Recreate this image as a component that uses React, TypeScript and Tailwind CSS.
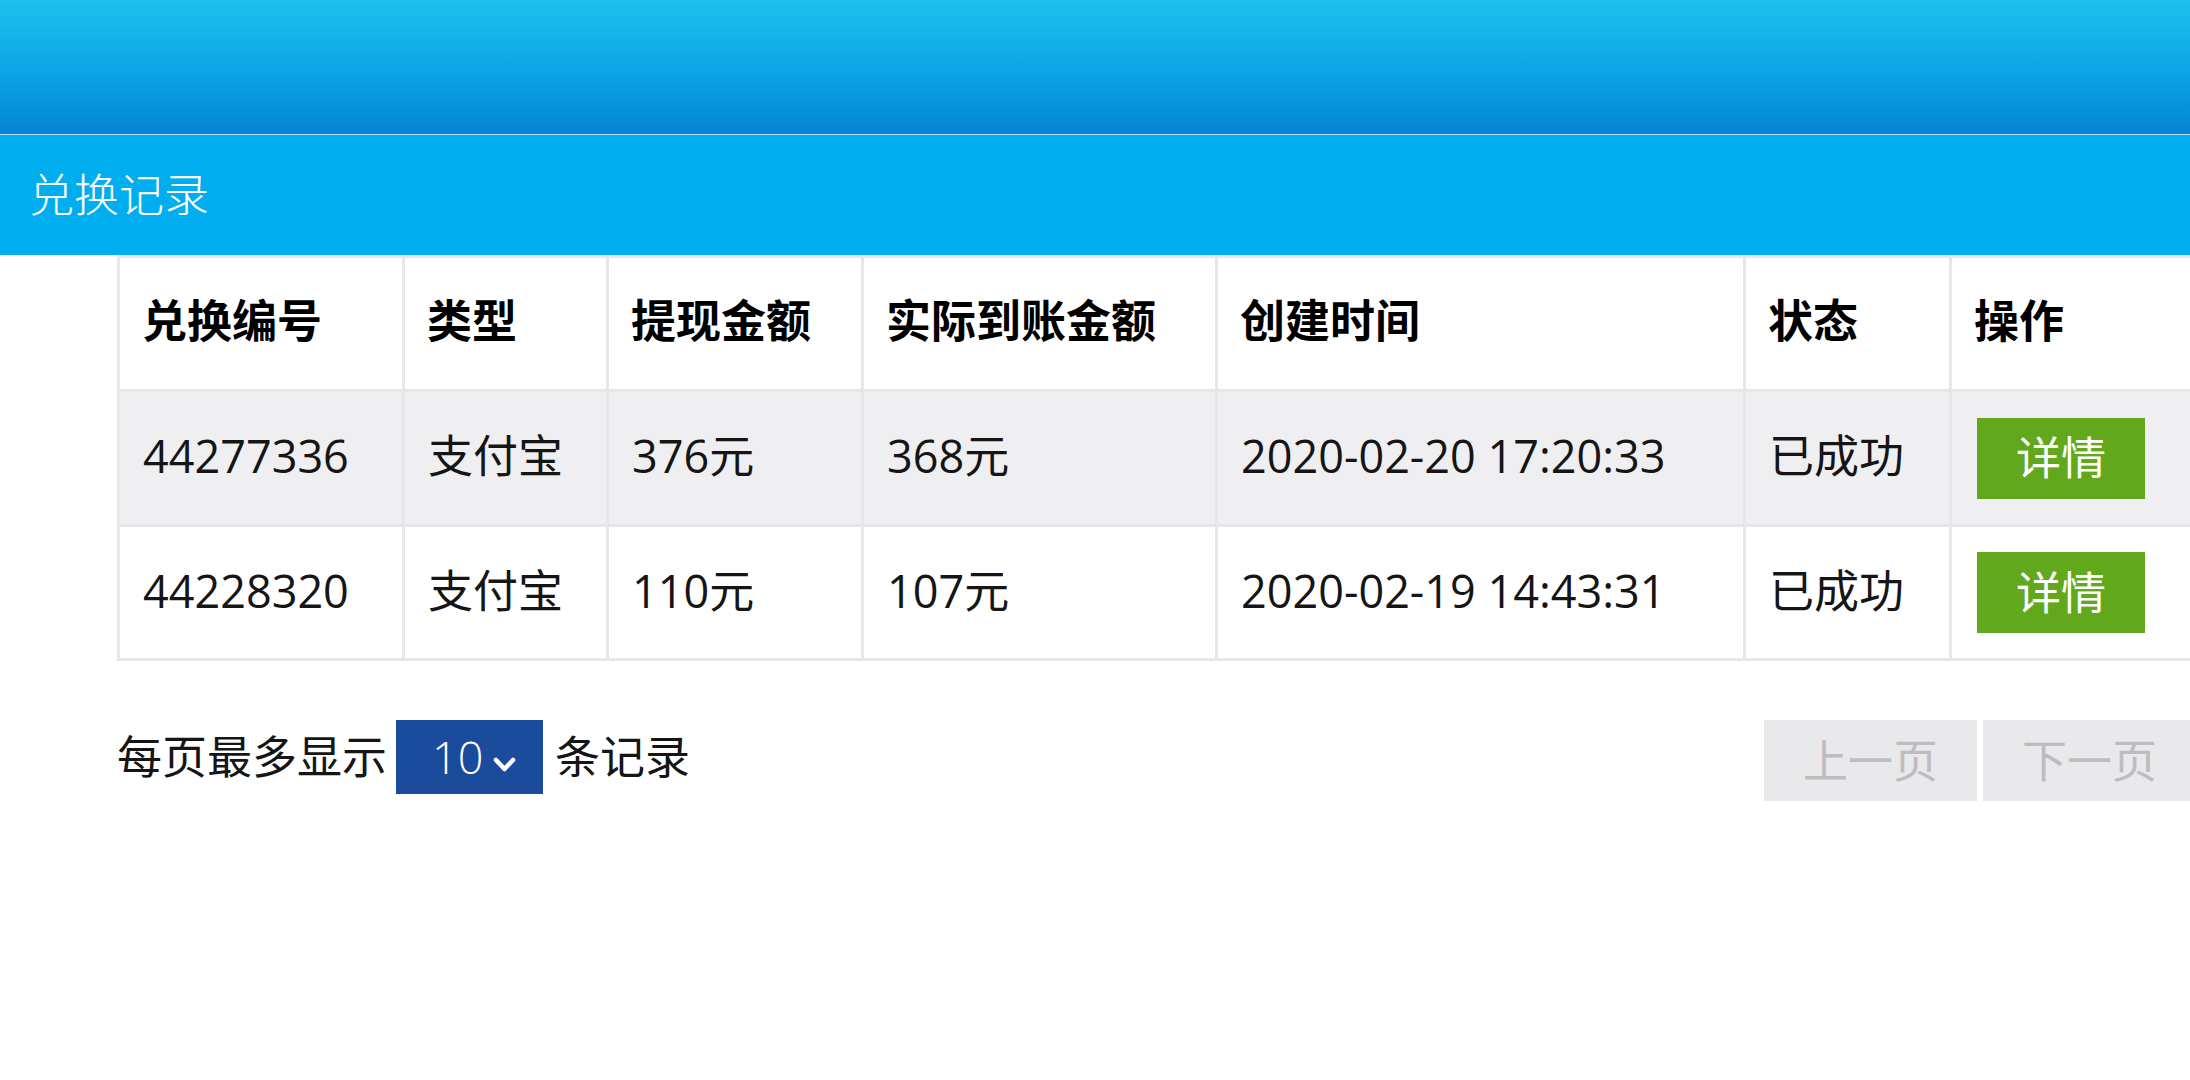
type Row = {
  id: string;
  type: string;
  amount: string;
  received: string;
  createdAt: string;
  status: string;
};

const rows: Row[] = [
  { id: '44277336', type: '支付宝', amount: '376元', received: '368元', createdAt: '2020-02-20 17:20:33', status: '已成功' },
  { id: '44228320', type: '支付宝', amount: '110元', received: '107元', createdAt: '2020-02-19 14:43:31', status: '已成功' },
];

const headers = ['兑换编号', '类型', '提现金额', '实际到账金额', '创建时间', '状态', '操作'];
const widths = [285, 204, 255, 354, 528, 206, 246];

export default function App() {
  return (
    <div className="h-[1080px] w-[2190px] overflow-hidden bg-white font-['Open_Sans','Noto_Sans_CJK_SC',sans-serif] text-[45px] text-[#151515]">
      <div className="h-[134px] bg-gradient-to-b from-[#1cc1ed] via-[#0ea7e6] to-[#0684d5]" />
      <div className="h-px bg-[#b9e3f6]" />
      <div className="flex h-[120px] items-center bg-[#00aeef] pl-[29px] font-light text-white">兑换记录</div>

      <table className="ml-[117px] w-[2081px] table-fixed border-collapse">
        <colgroup>
          {widths.map((w, i) => (
            <col key={i} style={{ width: w }} />
          ))}
        </colgroup>
        <thead>
          <tr className="h-[134px]">
            {headers.map((h) => (
              <th key={h} className="border-[3px] border-[#e7e6e9] pb-[6px] pl-[22px] text-left align-middle font-bold text-black">
                {h}
              </th>
            ))}
          </tr>
        </thead>
        <tbody>
          {rows.map((r, i) => (
            <tr key={r.id} className={i === 0 ? 'h-[135px] bg-[#efeef0]' : 'h-[134px] bg-white'}>
              {[r.id, r.type, r.amount, r.received, r.createdAt, r.status].map((v, j) => (
                <td key={j} className="border-[3px] border-[#e7e6e9] pb-[4px] pl-[23px] align-middle whitespace-nowrap">
                  {v}
                </td>
              ))}
              <td className="border-[3px] border-[#e7e6e9] pl-[25px] align-middle">
                <button className="flex h-[81px] w-[168px] items-center justify-center bg-[#62a81d] text-white">详情</button>
              </td>
            </tr>
          ))}
        </tbody>
      </table>

      <div className="mt-[59px] ml-[117px] flex w-[2079px] items-start justify-between">
        <div className="flex items-center">
          <span>每页最多显示</span>
          <div className="ml-[9px] flex h-[74px] w-[147px] items-center bg-[#1b4b9b] pl-[36px] text-white">
            <span className="font-light">10</span>
            <svg className="ml-[10px] mt-[16px]" width="23" height="16" viewBox="0 0 23 16" fill="none">
              <polyline points="3,3 11.5,12 20,3" stroke="white" strokeWidth="4.5" strokeLinecap="round" strokeLinejoin="round" />
            </svg>
          </div>
          <span className="ml-[12px]">条记录</span>
        </div>
        <div className="flex gap-[6px]">
          <button className="h-[81px] w-[213px] bg-[#e9e8eb] text-[#bdbcbf]">上一页</button>
          <button className="h-[81px] w-[213px] bg-[#e9e8eb] text-[#bdbcbf]">下一页</button>
        </div>
      </div>
    </div>
  );
}
